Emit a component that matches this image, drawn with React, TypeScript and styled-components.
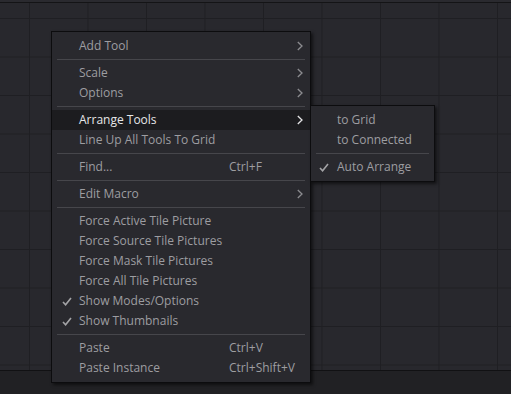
import React from 'react';
import styled, { createGlobalStyle } from 'styled-components';

type Entry =
    | { kind: 'sep' }
    | {
          kind: 'item';
          label: string;
          shortcut?: string;
          submenu?: boolean;
          checked?: boolean;
          active?: boolean;
      };

const MAIN_MENU: Entry[] = [
    { kind: 'item', label: 'Add Tool', submenu: true },
    { kind: 'sep' },
    { kind: 'item', label: 'Scale', submenu: true },
    { kind: 'item', label: 'Options', submenu: true },
    { kind: 'sep' },
    { kind: 'item', label: 'Arrange Tools', submenu: true, active: true },
    { kind: 'item', label: 'Line Up All Tools To Grid' },
    { kind: 'sep' },
    { kind: 'item', label: 'Find...', shortcut: 'Ctrl+F' },
    { kind: 'sep' },
    { kind: 'item', label: 'Edit Macro', submenu: true },
    { kind: 'sep' },
    { kind: 'item', label: 'Force Active Tile Picture' },
    { kind: 'item', label: 'Force Source Tile Pictures' },
    { kind: 'item', label: 'Force Mask Tile Pictures' },
    { kind: 'item', label: 'Force All Tile Pictures' },
    { kind: 'item', label: 'Show Modes/Options', checked: true },
    { kind: 'item', label: 'Show Thumbnails', checked: true },
    { kind: 'sep' },
    { kind: 'item', label: 'Paste', shortcut: 'Ctrl+V' },
    { kind: 'item', label: 'Paste Instance', shortcut: 'Ctrl+Shift+V' },
];

const ARRANGE_MENU: Entry[] = [
    { kind: 'item', label: 'to Grid' },
    { kind: 'item', label: 'to Connected' },
    { kind: 'sep' },
    { kind: 'item', label: 'Auto Arrange', checked: true },
];

const CheckIcon = () => (
    <svg width="10" height="9" viewBox="0 0 10 9">
        <path
            d="M1 5 L3.6 7.8 L9 1"
            fill="none"
            stroke="#a3a3a6"
            strokeWidth="1.6"
        />
    </svg>
);

const ChevronIcon = ({ active }: { active?: boolean }) => (
    <svg width="6" height="10" viewBox="0 0 6 10">
        <path
            d="M0.8 1 L5 5 L0.8 9"
            fill="none"
            stroke={active ? '#e4e4e6' : '#8c8c90'}
            strokeWidth="1.3"
        />
    </svg>
);

const MenuList = ({ entries, wide }: { entries: Entry[]; wide?: boolean }) => (
    <>
        {entries.map((entry, index) =>
            entry.kind === 'sep' ? (
                <Separator key={index} />
            ) : (
                <Item key={index} $active={entry.active} $wide={wide}>
                    <CheckCell $wide={wide}>
                        {entry.checked && <CheckIcon />}
                    </CheckCell>
                    <Label>{entry.label}</Label>
                    {wide && <Shortcut>{entry.shortcut}</Shortcut>}
                    {wide && (
                        <ArrowCell>
                            {entry.submenu && (
                                <ChevronIcon active={entry.active} />
                            )}
                        </ArrowCell>
                    )}
                </Item>
            ),
        )}
    </>
);

const App: React.FC = () => {
    return (
        <Screen>
            <GlobalStyle />
            <TopEdge />
            <Canvas>
                <ContextMenu>
                    <MenuList entries={MAIN_MENU} wide />
                </ContextMenu>
                <SubMenu>
                    <MenuList entries={ARRANGE_MENU} />
                </SubMenu>
            </Canvas>
            <StatusBar />
        </Screen>
    );
};

export default App;

const GlobalStyle = createGlobalStyle`
    html, body {
        margin: 0;
        padding: 0;
        background: #212124;
    }
    body {
        font-family: "Open Sans", "Noto Sans", sans-serif;
        font-size: 12px;
    }
`;

const Screen = styled.div`
    width: 511px;
    height: 394px;
    display: flex;
    flex-direction: column;
    overflow: hidden;
    background: #212124;
`;

const TopEdge = styled.div`
    height: 2px;
    background: #2a2a2f;
    border-bottom: 1px solid #141416;
`;

const Canvas = styled.div`
    position: relative;
    height: 367px;
    background-color: #28282d;
    background-image: linear-gradient(to right, #1f1f23 1px, transparent 1px),
        linear-gradient(to bottom, #1f1f23 1px, transparent 1px);
    background-size: 58.5px 38.5px;
    background-position: 29px 15px;
    border-bottom: 1px solid #111113;
`;

const StatusBar = styled.div`
    flex: 1;
    background: #212124;
`;

const MenuBox = styled.div`
    position: absolute;
    box-sizing: border-box;
    background: #29292e;
    border: 1px solid #0c0c0e;
    padding: 4px 0;
    box-shadow: 2px 2px 3px rgba(0, 0, 0, 0.55);
    display: flex;
    flex-direction: column;
`;

const ContextMenu = styled(MenuBox)`
    left: 51px;
    top: 28px;
    width: 260px;
    z-index: 1;
`;

const SubMenu = styled(MenuBox)`
    left: 310px;
    top: 102px;
    width: 125px;
    z-index: 2;
`;

const Item = styled.div<{ $active?: boolean; $wide?: boolean }>`
    display: grid;
    grid-template-columns: ${(p) =>
        p.$wide ? '27px 150px 1fr 6px' : '26px 1fr'};
    align-items: center;
    height: 20px;
    padding-right: ${(p) => (p.$wide ? '7px' : '0')};
    background: ${(p) => (p.$active ? '#1c1c1f' : 'transparent')};
    color: ${(p) => (p.$active ? '#e6e6e8' : '#9d9da1')};
    white-space: nowrap;
`;

const CheckCell = styled.div<{ $wide?: boolean }>`
    display: flex;
    align-items: center;
    padding-left: ${(p) => (p.$wide ? '10px' : '8px')};
    height: 100%;
`;

const Label = styled.span`
    line-height: 20px;
`;

const Shortcut = styled.span`
    line-height: 20px;
`;

const ArrowCell = styled.div`
    display: flex;
    align-items: center;
    height: 100%;
`;

const Separator = styled.div`
    height: 1px;
    margin: 3px 5px;
    background: #46464b;
`;
